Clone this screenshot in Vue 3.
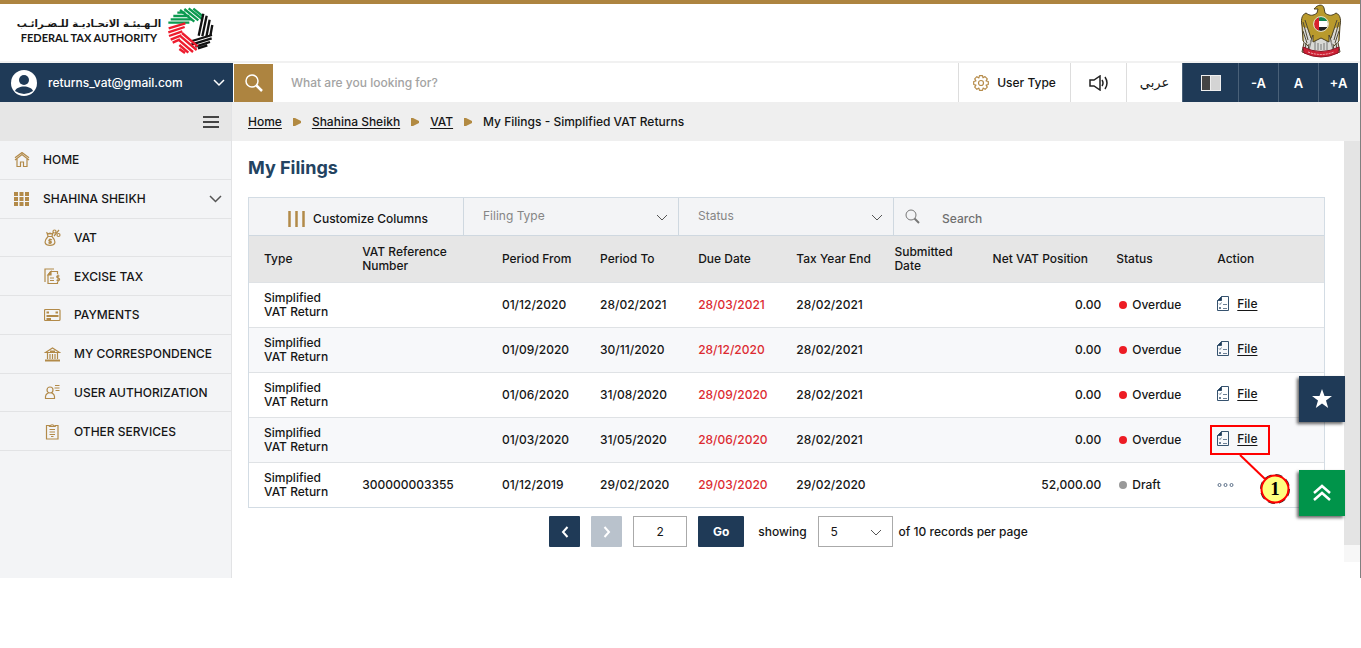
<script setup>
import { ref } from 'vue'

const email = 'returns_vat@gmail.com'
const search = ref('')
const filter = ref('')
const page = ref('2')
const services = [
  { id: 'vat', label: 'VAT' },
  { id: 'excise', label: 'EXCISE TAX' },
  { id: 'payments', label: 'PAYMENTS' },
  { id: 'mail', label: 'MY CORRESPONDENCE' },
  { id: 'user', label: 'USER AUTHORIZATION' },
  { id: 'other', label: 'OTHER SERVICES' }
]
const crumbs = ['Home', 'Shahina Sheikh', 'VAT']
const columns = [
  'Type', 'VAT Reference Number', 'Period From', 'Period To', 'Due Date',
  'Tax Year End', 'Submitted Date', 'Net VAT Position', 'Status', 'Action'
]
const rows = [
  { vrn: '', from: '01/12/2020', to: '28/02/2021', due: '28/03/2021', end: '28/02/2021', net: '0.00', status: 'Overdue' },
  { vrn: '', from: '01/09/2020', to: '30/11/2020', due: '28/12/2020', end: '28/02/2021', net: '0.00', status: 'Overdue' },
  { vrn: '', from: '01/06/2020', to: '31/08/2020', due: '28/09/2020', end: '28/02/2021', net: '0.00', status: 'Overdue' },
  { vrn: '', from: '01/03/2020', to: '31/05/2020', due: '28/06/2020', end: '28/02/2021', net: '0.00', status: 'Overdue', step: 1 },
  { vrn: '300000003355', from: '01/12/2019', to: '29/02/2020', due: '29/03/2020', end: '29/02/2020', net: '52,000.00', status: 'Draft' }
]
</script>

<template>
  <div class="page">
    <header class="brand">
      <div class="authority">
        <div class="names">
          <span class="name-ar" lang="ar" dir="rtl">الـهـيئـة الاتحـاديـة للـضـرائـب</span>
          <span class="name-en">FEDERAL TAX AUTHORITY</span>
        </div>
        <svg class="wreath" viewBox="16 20 144 144" fill="none" stroke-width="7">
          <g stroke="#0b9a50">
            <path d="M23 67H86M30 57H94M38 47H86M50 37H74" />
            <path d="M58 29L101 64M71 26L113 60M84 24L124 56M98 25L128 49" />
          </g>
          <g stroke="#111">
            <path d="M128 40L114 106M138 46L125 108M147 58L137 110M155 74L149 106" />
            <path d="M154 104L94 122M153 114L92 133M148 125L104 139M140 135L112 144" />
          </g>
          <g stroke="#ee1c2e">
            <path d="M64 98L111 138M60 108L108 149M56 120L97 155M56 134L83 157M56 146L73 158" />
            <path d="M74 69L24 84M72 80L23 96M65 93L25 107M62 105L30 118M58 117L36 127" />
          </g>
        </svg>
      </div>
      <svg class="emblem" viewBox="0 0 42 54">
        <defs><clipPath id="shield"><circle cx="21" cy="20" r="7" /></clipPath></defs>
        <path fill="#d9d9d6" stroke="#4b4024" d="M8 20L2 48L13 51L21 48L29 51L40 48L34 20Z" />
        <path d="M12 34L9 46M15 36V46M18 39V46M21 40V46M24 39V46M27 36V46M30 34L33 46" stroke="#777" />
        <path fill="#b99a2c" stroke="#4b4024" d="M17 9C13 12 10 12 6 9C1 11 1 17 2 22L3 37L8 42L13 31L13 38L21 34L29 38L29 31L34 42L39 37L40 22C41 17 41 11 36 9C32 12 29 12 25 9L24 4C23 0 18 0 14 5L18 5Z" />
        <path fill="#d9d9d6" d="M3 23L4 38L9 42L11 35L7 24ZM39 23L38 38L33 42L31 35L35 24Z" />
        <path d="M3 18L8 36M5 16L11 34M39 18L34 36M37 16L31 34M3 27L7 39M39 27L35 39M6 39L5 47M9 40L8 47M33 40L34 47M36 39L37 47" stroke="#4f4a36" />
        <g clip-path="url(#shield)">
          <path fill="#fff" d="M14 13H28V27H14Z" />
          <path fill="#168651" d="M14 13H28V17H14Z" />
          <path fill="#222" d="M14 23H28V27H14Z" />
          <path fill="#d8232e" d="M14 13H19V27H14Z" />
        </g>
        <circle cx="21" cy="20" r="7.500" fill="none" stroke="#e0dac0" />
        <path fill="#ce2034" stroke="#8e1525" d="M3 43Q21 52 39 43L38 49Q21 57 4 49Z" />
        <path d="M8 48Q21 53 34 48" fill="none" stroke="#f2b6bb" stroke-dasharray="2 1" />
      </svg>
    </header>

    <div class="toolbar">
      <button class="account" type="button">
        <svg width="28" height="28" viewBox="0 0 28 28">
          <circle cx="14" cy="14" r="13" fill="#fff" />
          <circle cx="14" cy="11" r="5" fill="#1f3a57" />
          <path d="M5 22C7 16 21 16 23 22Q14 28 5 22Z" fill="#1f3a57" />
        </svg>
        <span>{{ email }}</span>
        <svg class="end" width="12" height="8" viewBox="0 0 12 8" fill="none" stroke="#fff" stroke-width="1.500"><path d="M1 1L6 6L11 1" /></svg>
      </button>
      <button class="find" type="button" aria-label="Search">
        <svg width="18" height="18" viewBox="0 0 18 18" fill="none" stroke="#fff" stroke-width="1.500"><circle cx="7" cy="7" r="6" /><path d="M11.500 11.500L17 17" stroke-width="2.500" /></svg>
      </button>
      <input v-model="search" class="query" type="text" aria-label="Search the site" placeholder="What are you looking for?" />
      <button class="tool user-type" type="button">
        <svg width="16" height="16" viewBox="0 0 16 16" fill="none" stroke="#b68c4b" stroke-width="1.200" stroke-linejoin="round">
          <path d="M6.500 .700H9.500L10 2.800L12 1.600L14.300 3.900L13.100 5.900L15.300 6.500V9.500L13.100 10.100L14.300 12.100L12.100 14.300L10.100 13.100L9.500 15.300H6.500L5.900 13.100L3.900 14.300L1.700 12.100L2.900 10.100L.700 9.500V6.500L2.900 5.900L1.700 3.900L3.900 1.700L5.900 2.900Z" />
          <circle cx="8" cy="8" r="2.500" />
        </svg>
        User Type
      </button>
      <button class="tool icon-tool" type="button" aria-label="Read aloud">
        <svg width="20" height="16" viewBox="0 0 20 16" fill="none" stroke="#222" stroke-width="1.500"><path d="M1 5H5L11 1V15L5 11H1ZM13 5Q15 8 13 11M16 2Q20 8 16 14" /></svg>
      </button>
      <button class="tool icon-tool arabic" type="button" lang="ar">عربي</button>
      <button class="tool dark contrast" type="button" aria-label="Contrast">
        <svg width="20" height="16" viewBox="0 0 20 16"><path fill="#eee" d="M0 0H20V16H0Z" /><path fill="#444" d="M1 1H9V15H1Z" /><path fill="#d4d4d4" d="M10 1H19V15H10Z" /></svg>
      </button>
      <button class="tool dark" type="button">-A</button>
      <button class="tool dark" type="button">A</button>
      <button class="tool dark" type="button">+A</button>
    </div>

    <div class="body">
      <aside class="side">
        <div class="side-top">
          <button type="button" aria-label="Toggle menu">
            <svg width="16" height="14" viewBox="0 0 16 14" stroke="#444" stroke-width="2"><path d="M0 2H16M0 7H16M0 12H16" /></svg>
          </button>
        </div>
        <nav class="menu">
          <a href="#" class="entry">
            <svg width="16" height="16" viewBox="0 0 16 16" fill="none" stroke="#b28a49" stroke-width="1.200"><path d="M1 8L8 2.500L15 8M1 5.800L8 .500L15 5.800M3 7V14.500H6.500V10H9.500V14.500H13V7" /></svg>
            HOME
          </a>
          <a href="#" class="entry">
            <svg width="16" height="16" viewBox="0 0 16 16" fill="#b28a49"><path d="M0 1h4v4H0ZM5.500 1h4v4H5.500ZM11 1h4v4H11ZM0 6h4v4H0ZM5.500 6h4v4H5.500ZM11 6h4v4H11ZM0 11h4v4H0ZM5.500 11h4v4H5.500ZM11 11h4v4H11Z" /></svg>
            SHAHINA SHEIKH
            <svg class="end" width="13" height="8" viewBox="0 0 13 8" fill="none" stroke="#555" stroke-width="1.500"><path d="M1 1L6.500 6.500L12 1" /></svg>
          </a>
          <a v-for="s in services" :key="s.id" href="#" class="entry sub">
            <svg width="17" height="17" viewBox="0 0 17 17" fill="none" stroke="#b28a49" stroke-width="1.200">
              <g v-if="s.id === 'vat'"><path d="M4 7.500H8C13 13 11 16.300 6 16.300S-1 13 4 7.500ZM4 7L3 4L5 5L6 4L7 5L9 4L8 7M8 11Q6 9.500 5 11Q4.500 12 6 12.300Q8 12.500 7 14Q5.500 14.500 4.500 13.500M6 9.500V15M10 7L15 1" /><circle cx="10.500" cy="2.500" r="1.500" /><circle cx="14.500" cy="6" r="1.500" /></g>
              <g v-else-if="s.id === 'excise'"><path d="M1 14V1H10M6.500 3.500H13.500V6M4 7V15.500H13.500V14M6.500 3.500L4 7M6 10H10M6 12.500H10M15.500 8Q12 7.500 13 9.500Q16 10 15.500 12Q14 13 12.500 12M14 6.500V14" /><path d="M4 7L7 3.500V7Z" fill="#b28a49" /></g>
              <g v-else-if="s.id === 'payments'"><rect x=".5" y="2.500" width="15.500" height="11" rx="1" /><path d="M2.500 5.500H5M11.500 5.500H14M2.500 9H14.500M2.500 12H7" stroke-width="2" /></g>
              <g v-else-if="s.id === 'mail'"><path d="M1.500 6.500L8.500 2L15.500 6.500ZM3.500 7V13M6 8V13M8.500 8V13M11 8V13M13.500 7V13" /><path d="M1 14.500H16M6 5.500H11" stroke-width="2" /></g>
              <g v-else-if="s.id === 'user'"><circle cx="6" cy="6" r="3" /><path d="M4.500 9Q1 10 1.500 14.500H10.500Q11 10 7.500 9M11 1.500H15.500M10.500 4H15.500M11.500 6.500H15.500" /></g>
              <g v-else><path d="M6 2.500H2.500V16H14V2.500H11M5.500 3.500Q8 0 11 3.500ZM5.500 6.500H11M5.500 9H11M5.500 11.500H11M7 13.500H9.500" /></g>
            </svg>
            {{ s.label }}
          </a>
        </nav>
      </aside>

      <div class="content">
        <nav class="crumbs" aria-label="Breadcrumb">
          <template v-for="c in crumbs" :key="c">
            <a href="#">{{ c }}</a>
            <svg width="8" height="8" viewBox="0 0 8 8"><path d="M0 0H2L8 3V5L2 8H0Z" fill="#b28a42" /></svg>
          </template>
          <span>My Filings - Simplified VAT Returns</span>
        </nav>

        <div class="viewport">
          <main>
            <h1>My Filings</h1>
            <div class="grid">
              <div class="filters">
                <button class="customize" type="button">
                  <svg width="17" height="16" viewBox="0 0 17 16" stroke="#b28a49" stroke-width="2.500"><path d="M1.500 0V16M8.500 0V16M15.500 0V16" /></svg>
                  Customize Columns
                </button>
                <div v-for="f in ['Filing Type', 'Status']" :key="f" class="pick">
                  <select :aria-label="f"><option>{{ f }}</option></select>
                  <svg width="12" height="8" viewBox="0 0 12 8" fill="none" stroke="#555"><path d="M1 1L6 6L11 1" /></svg>
                </div>
                <label class="lookup">
                  <svg width="15" height="15" viewBox="0 0 15 15" fill="none" stroke="#777"><circle cx="6" cy="6" r="5" /><path d="M9.500 9.500L14 14" stroke-width="2" /></svg>
                  <input v-model="filter" type="text" placeholder="Search" aria-label="Search filings" />
                </label>
              </div>
              <table>
                <colgroup><col v-for="(c, i) in columns" :key="c" :class="'c' + i" /></colgroup>
                <thead><tr><th v-for="c in columns" :key="c" scope="col">{{ c }}</th></tr></thead>
                <tbody>
                  <tr v-for="r in rows" :key="r.from">
                    <td>Simplified<br />VAT Return</td>
                    <td>{{ r.vrn }}</td>
                    <td>{{ r.from }}</td>
                    <td>{{ r.to }}</td>
                    <td class="due">{{ r.due }}</td>
                    <td>{{ r.end }}</td>
                    <td></td>
                    <td class="net">{{ r.net }}</td>
                    <td class="status" :class="r.status.toLowerCase()"><i></i>{{ r.status }}</td>
                    <td class="action">
                      <a v-if="r.status === 'Overdue'" href="#" class="file">
                        <svg width="12" height="16" viewBox="0 0 12 16" fill="none" stroke="#36536f"><path d="M4.500 .500H11.500V14.500H.5V4.500Z" /><path d="M2 7.500L3 8.500L4.500 6.500M6 8.500H10M2 11L4 13M2 13L4 11M6 12.500H10" stroke="#6d8196" /><path d="M.5 4.500L4.500 .5V4.500Z" fill="#1f3a57" /></svg>
                        <span>File</span>
                      </a>
                      <button v-else class="more" type="button" aria-label="More actions">
                        <svg width="17" height="6" viewBox="0 0 17 6" fill="none" stroke="#5b6f88"><circle cx="2.500" cy="3" r="1.500" /><circle cx="8.500" cy="3" r="1.500" /><circle cx="14.500" cy="3" r="1.500" /></svg>
                      </button>
                      <svg v-if="r.step" class="callout" width="84" height="84" viewBox="0 0 84 84" fill="none" stroke="#f00" stroke-width="2">
                        <rect x="2" y="2" width="58" height="28" />
                        <path d="M31 31L56 55" />
                        <circle cx="66" cy="65" r="14" fill="#ffff80" stroke="#222" stroke-dasharray="7 4" />
                        <circle cx="66" cy="65" r="13.500" />
                        <text x="66" y="71" text-anchor="middle" fill="#000" stroke="none">{{ r.step }}</text>
                      </svg>
                    </td>
                  </tr>
                </tbody>
              </table>
            </div>

            <div class="pager">
              <button class="step" type="button" aria-label="Previous page"><svg width="8" height="12" viewBox="0 0 8 12" fill="none" stroke="#fff" stroke-width="2"><path d="M6.500 1L2 6L6.500 11" /></svg></button>
              <button class="step off" type="button" disabled aria-label="Next page"><svg width="8" height="12" viewBox="0 0 8 12" fill="none" stroke="#fff" stroke-width="2"><path d="M1.500 1L6 6L1.500 11" /></svg></button>
              <input v-model="page" type="text" aria-label="Page number" />
              <button class="go" type="button">Go</button>
              <label for="size">showing</label>
              <div class="size">
                <select id="size"><option>5</option></select>
                <svg width="12" height="8" viewBox="0 0 12 8" fill="none" stroke="#555"><path d="M1 1L6 6L11 1" /></svg>
              </div>
              <span class="total">of 10 records per page</span>
            </div>
          </main>
          <div class="track"></div>
        </div>
      </div>
    </div>

    <div class="floating">
      <button type="button" aria-label="Favourites"><svg width="20" height="20" viewBox="0 0 20 20" fill="#fff"><path d="M10 0L12.500 7H20L14 11.500L16.200 19L10 14.500L3.800 19L6 11.500L0 7H7.500Z" /></svg></button>
      <button class="up" type="button" aria-label="Back to top"><svg width="18" height="18" viewBox="0 0 18 18" fill="none" stroke="#fff" stroke-width="2.500"><path d="M1 9L9 2L17 9M1 16L9 9L17 16" /></svg></button>
    </div>
  </div>
</template>

<style>
body { background: #fff; }
</style>

<style scoped>
* { box-sizing: border-box; }
.page {
  min-height: 578px;
  display: flex;
  flex-direction: column;
  border-right: 1px solid #808080;
  color: #161616;
  font: 500 12px/14px Inter, "DejaVu Sans", sans-serif;
}
button, input, select { font: inherit; color: inherit; border: 0; border-radius: 0; margin: 0; padding: 0; background: none; }
a { color: inherit; }
svg { display: block; flex: none; }
.end { margin-left: auto; }

.brand {
  display: flex;
  justify-content: space-between;
  align-items: flex-start;
  height: 63px;
  padding: 0 18px 0 18px;
  border-top: 4px solid #ad8440;
  border-bottom: 2px solid #f1f1f1;
}
.authority { display: flex; gap: 6px; align-items: center; padding-top: 3px; }
.names { display: flex; flex-direction: column; align-items: center; gap: 2px; width: 142px; white-space: nowrap; }
.name-ar { font: 700 10px/12px "DejaVu Sans", sans-serif; }
.name-en { font: 700 11px/12px Lato, sans-serif; }
.wreath { width: 48px; height: 48px; }
.emblem { width: 42px; height: 54px; }

.toolbar { display: flex; height: 39px; padding-right: 2px; }
.account { display: flex; align-items: center; gap: 10px; width: 233px; padding: 0 8px 0 10px; background: #1f3a57; color: #fff; }
.find { display: grid; place-items: center; width: 39px; margin: 1px 0 0 1px; background: #ad8440; }
.query { flex: 1; min-width: 0; padding: 0 18px; }
.query::placeholder { color: #a3a3a3; opacity: 1; }
.tool { display: flex; align-items: center; justify-content: center; width: 40px; border-left: 1px solid #ddd; }
.user-type { width: 112px; gap: 8px; }
.icon-tool { width: 56px; }
.arabic { font: 400 13px/16px "DejaVu Sans", sans-serif; }
.dark { background: #1f3a57; color: #fff; border-color: #496078; font-size: 13px; font-weight: 600; }
.contrast { width: 56px; }

.body { flex: 1; display: flex; }
.side { width: 232px; background: #f3f4f6; border-right: 1px solid #e2e3e5; }
.side-top { display: flex; justify-content: flex-end; align-items: center; height: 39px; padding-right: 12px; background: #e6e6e6; }
.menu { display: grid; grid-template-rows: repeat(8, 1fr); height: 310px; }
.entry { display: flex; align-items: center; gap: 13px; padding: 1px 9px 0 14px; border-bottom: 1px solid #e2e3e5; text-decoration: none; }
.sub { padding-left: 44px; }

.content { flex: 1; min-width: 0; display: flex; flex-direction: column; }
.crumbs { display: flex; align-items: center; gap: 11px; height: 39px; padding-left: 16px; background: #efefef; }
.crumbs a { text-underline-offset: 2px; }
.viewport { flex: 1; display: flex; align-items: flex-start; }
main { flex: 1; min-width: 0; padding: 16px 19px 0 16px; }
h1 { margin: 0 0 19px; font-size: 18px; line-height: 21px; font-weight: 700; color: #234361; }
.track { width: 16px; height: 421px; background: #e4e4e4; border-bottom: 17px solid #f7f7f7; }

.grid { border: 1px solid #d3dce4; }
.filters { display: grid; grid-template-columns: 1fr 1fr 1fr 2fr; height: 38px; background: #f3f4f6; border-bottom: 1px solid #cfd8e0; }
.filters > * { border-right: 1px solid #cfd8e0; }
.filters > :last-child { border-right: 0; }
.customize { display: flex; align-items: center; justify-content: center; gap: 8px; padding: 4px 0 0 4px; }
.pick, .size { position: relative; }
.pick select, .size select { width: 100%; height: 100%; appearance: none; }
.pick select { padding: 0 19px 2px; color: #858585; font-weight: 400; }
.pick svg, .size svg { position: absolute; right: 10px; top: 50%; margin-top: -3px; pointer-events: none; }
.lookup { display: flex; align-items: center; gap: 22px; padding-left: 11px; }
.lookup input { flex: 1; min-width: 0; height: 32px; padding-top: 3px; }
.lookup input::placeholder { color: #6f6f6f; opacity: 1; }

table { width: 100%; table-layout: fixed; border-collapse: collapse; }
.c0, .c2, .c3, .c4, .c5, .c6 { width: 9.13%; }
.c1 { width: 13%; }
.c7 { width: 11.5%; }
.c8 { width: 9.4%; }
th { height: 46px; padding: 1px 0 0 15px; text-align: left; font-weight: 500; background: #e6e6e6; }
th:nth-child(8) { white-space: nowrap; }
td { height: 45px; padding: 0 0 0 15px; border-top: 1px solid #dfe2e5; }
tbody tr:nth-child(even) { background: #f7f8fa; }
.due { color: #dc2b31; }
.net { text-align: right; }
.status { padding-left: 18px; }
.status i { display: inline-block; width: 8px; height: 8px; margin-right: 5px; border-radius: 50%; background: #ed1c24; }
.draft i { background: #999; }
.action { position: relative; padding: 0 0 2px 15px; }
.file { display: flex; align-items: center; gap: 8px; text-underline-offset: 2px; }
.callout { position: absolute; left: 7px; top: 6px; z-index: 2; pointer-events: none; }
.callout text { font: 700 19px "Liberation Serif", serif; }

.pager { display: flex; align-items: center; justify-content: center; height: 31px; margin-top: 8px; padding-left: 4px; }
.pager > * { margin-right: 11px; }
.step { display: grid; place-items: center; width: 31px; height: 31px; border-radius: 1px; background: #1f3a57; }
.off { background: #b9c2cc; }
.pager input { width: 54px; height: 31px; border: 1px solid #aaa; text-align: center; font-weight: 400; }
.pager .go { width: 46px; height: 31px; margin-right: 14px; border-radius: 1px; background: #1f3a57; color: #fff; font-weight: 700; }
.pager .size { width: 75px; height: 31px; margin-right: 6px; border: 1px solid #aaa; }
.size select { padding-left: 12px; font-weight: 400; }
.pager .total { margin-right: 0; }

.floating { position: fixed; right: 16px; top: 376px; z-index: 3; display: grid; gap: 48px; }
.floating button { display: grid; place-items: center; width: 46px; height: 46px; background: #1f3a57; box-shadow: -2px 2px 3px #0009; }
.floating .up { background: #00944a; }
</style>
